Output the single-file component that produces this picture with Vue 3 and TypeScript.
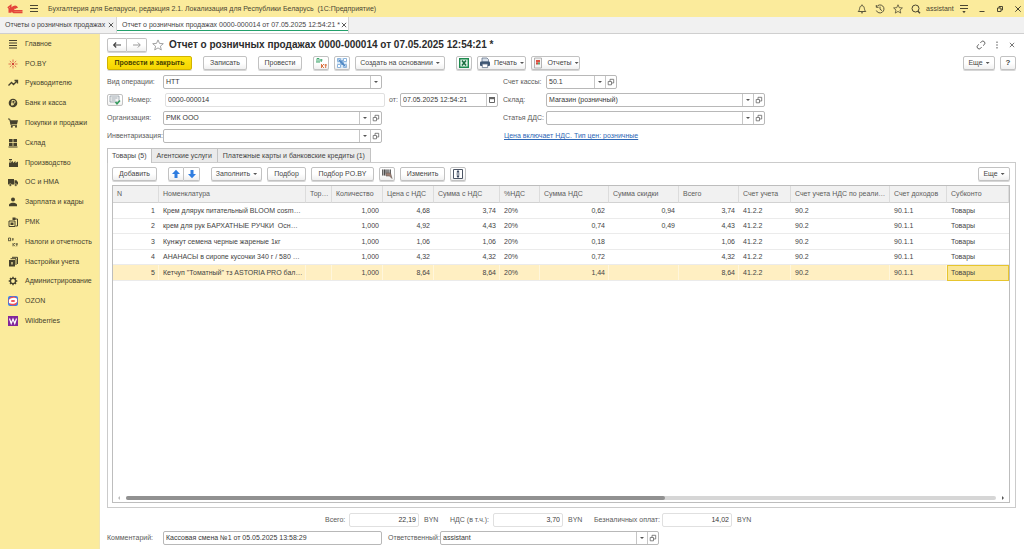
<script setup lang="ts">
import { ref } from 'vue'

interface Section { icon: string; title: string }
interface Column { title: string; width: number; num?: boolean }

const sections: Section[] = [
  { icon: 'lines', title: 'Главное' },
  { icon: 'spark', title: 'PO.BY' },
  { icon: 'trend', title: 'Руководителю' },
  { icon: 'coin', title: 'Банк и касса' },
  { icon: 'cart', title: 'Покупки и продажи' },
  { icon: 'boxes', title: 'Склад' },
  { icon: 'factory', title: 'Производство' },
  { icon: 'truck', title: 'ОС и НМА' },
  { icon: 'person', title: 'Зарплата и кадры' },
  { icon: 'register', title: 'РМК' },
  { icon: 'dtkt', title: 'Налоги и отчетность' },
  { icon: 'books', title: 'Настройки учета' },
  { icon: 'gear', title: 'Администрирование' },
  { icon: 'ozon', title: 'OZON' },
  { icon: 'wb', title: 'Wildberries' },
]

// The last column has no width of its own and takes what is left.
const columns: Column[] = [
  { title: 'N', width: 46, num: true },
  { title: 'Номенклатура', width: 147 },
  { title: 'Тор…', width: 26 },
  { title: 'Количество', width: 51, num: true },
  { title: 'Цена с НДС', width: 51, num: true },
  { title: 'Сумма с НДС', width: 66, num: true },
  { title: '%НДС', width: 40 },
  { title: 'Сумма НДС', width: 69, num: true },
  { title: 'Сумма скидки', width: 70, num: true },
  { title: 'Всего', width: 60, num: true },
  { title: 'Счет учета', width: 52 },
  { title: 'Счет учета НДС по реали…', width: 99 },
  { title: 'Счет доходов', width: 57 },
  { title: 'Субконто', width: 0 },
]

const rows: string[][] = [
  ['1', 'Крем длярук питательный BLOOM cosm…', '', '1,000', '4,68', '3,74', '20%', '0,62', '0,94', '3,74', '41.2.2', '90.2', '90.1.1', 'Товары'],
  ['2', 'крем для рук БАРХАТНЫЕ РУЧКИ\u00a0 Осн…', '', '1,000', '4,92', '4,43', '20%', '0,74', '0,49', '4,43', '41.2.2', '90.2', '90.1.1', 'Товары'],
  ['3', 'Кунжут семена черные жареные 1кг', '', '1,000', '1,06', '1,06', '20%', '0,18', '', '1,06', '41.2.2', '90.2', '90.1.1', 'Товары'],
  ['4', 'АНАНАСЫ в сиропе кусочки 340 г / 580 …', '', '1,000', '4,32', '4,32', '20%', '0,72', '', '4,32', '41.2.2', '90.2', '90.1.1', 'Товары'],
  ['5', 'Кетчуп "Томатный" тз ASTORIA PRO бал…', '', '1,000', '8,64', '8,64', '20%', '1,44', '', '8,64', '41.2.2', '90.2', '90.1.1', 'Товары'],
]

const selected = ref(4)
const operation = ref('НТТ')
</script>

<template>
  <div class="app">
    <svg class="sprite" aria-hidden="true">
      <symbol id="menu" viewBox="0 0 10 10"><path d="M1 1.5h8M1 4.5h8M1 7.5h8" stroke="currentColor" fill="none" /></symbol>
      <symbol id="bell" viewBox="0 0 10 10"><path d="M1.2 7.5h7.6C7.4 6.3 7.6 5 7.1 3.4 6.7 2.2 6 1.7 5 1.7S3.3 2.2 2.9 3.4C2.4 5 2.6 6.3 1.2 7.5zM5 .5v1.2M4 8.8h2" stroke="currentColor" stroke-width=".9" fill="none" /></symbol>
      <symbol id="history" viewBox="0 0 10 10"><path d="M1.6 2.8A4 4 0 1 1 1.3 6.500M1.300 1v2.300h2.300M5 2.600V5.200l2 1.500" stroke="currentColor" stroke-width=".9" fill="none" /></symbol>
      <symbol id="star" viewBox="0 0 12 12"><path d="M6 .9l1.500 3.500 3.800.300-2.900 2.500.900 3.700L6 8.900l-3.300 2 .900-3.700L.7 4.700l3.800-.300z" stroke="currentColor" stroke-width=".9" fill="none" /></symbol>
      <symbol id="search" viewBox="0 0 10 10"><circle cx="4.500" cy="4.500" r="3.500" stroke="currentColor" fill="none" /><path d="M6.800 7l2.200 2.200" stroke="currentColor" stroke-width="1.400" /></symbol>
      <symbol id="service" viewBox="0 0 10 10"><path d="M1 1.500h8M1 4.500h8" stroke="currentColor" /><path d="M3.300 7h3.400L5 9.200z" fill="currentColor" /></symbol>
      <symbol id="minimize" viewBox="0 0 10 10"><path d="M2.500 7.500h5" stroke="currentColor" /></symbol>
      <symbol id="restore" viewBox="0 0 10 10"><path d="M2.500 4h3.500v3.500H2.500zM4 4V2.500h3.500V6H6" stroke="currentColor" fill="none" /></symbol>
      <symbol id="close" viewBox="0 0 10 10"><path d="M2.300 2.300l5.400 5.400M7.700 2.300L2.300 7.700" stroke="currentColor" fill="none" /></symbol>
      <symbol id="link" viewBox="0 0 10 10"><path d="M4.400 2.900l1-1.200a2 2 0 0 1 2.900 2.900L7.100 5.600M5.600 7.100l-1 1.200a2 2 0 0 1-2.900-2.900l1.200-1" stroke="currentColor" stroke-width=".9" fill="none" /></symbol>
      <symbol id="dots" viewBox="0 0 10 10"><path d="M4.500 1.500h1v1.400h-1zM4.500 4.300h1v1.400h-1zM4.500 7.100h1v1.400h-1z" fill="currentColor" /></symbol>
      <symbol id="back" viewBox="0 0 10 10"><path d="M9 5H2M4.200 2.500L1.700 5l2.500 2.500" stroke="currentColor" stroke-width="1.200" fill="none" /></symbol>
      <symbol id="forward" viewBox="0 0 10 10"><path d="M1 5h7M5.800 2.500L8.300 5 5.800 7.500" stroke="currentColor" fill="none" /></symbol>
      <symbol id="open" viewBox="0 0 8 8"><path d="M1.200 3.500h3.300v3.300H1.200zM3 3.300V1.300h3.700V5H4.700" stroke="currentColor" stroke-width=".8" fill="none" /></symbol>
      <symbol id="calendar" viewBox="0 0 8 8"><path d="M1.500 1.500h5v5h-5z" stroke="currentColor" fill="none" /><path d="M1 1h6v2.200H1z" fill="currentColor" /></symbol>
      <symbol id="dtkt-color" viewBox="0 0 12 12"><path d="M2 4.500V1.500h2v3M1 5h4M5 3h2.500M6.200 2v3" stroke="#3fa66c" fill="none" /><path d="M6.500 7v4M9 7L7 9 9 11M9.500 8H12M10.700 7v4" stroke="#dc7543" fill="none" /></symbol>
      <symbol id="structure" viewBox="0 0 12 12"><path d="M1 1h10v10H1z" fill="#d8e8f7" /><path d="M1.500 1.500h3v3h-3zM7.500 1.500h3v3h-3zM7.500 7.500h3v3h-3zM1.500 7.500h3v3h-3z" stroke="#8db5dd" fill="#fff" /><path d="M2.500 2.500l7 7M4 6h4M6 3v5" stroke="#4c86c4" stroke-width="1.200" /></symbol>
      <symbol id="excel" viewBox="0 0 12 12"><path d="M1.700 1.700h8.600v8.600H1.700z" fill="#e4f3e9" stroke="#1f8b50" stroke-width="1.400" /><path d="M4 3.500l4 5M8 3.500l-4 5" stroke="#176e3e" stroke-width="1.500" /></symbol>
      <symbol id="printer" viewBox="0 0 12 12"><path d="M3 1h5l1.500 1.500V5H3z" fill="#d7dfe9" stroke="#65758b" stroke-width=".8" /><rect x="1" y="4.500" width="10" height="4.500" rx="1" fill="#3e5673" /><path d="M3.300 7h5.400v3.600H3.300z" fill="#fff" stroke="#65758b" stroke-width=".8" /></symbol>
      <symbol id="report" viewBox="0 0 12 12"><path d="M2.500 1h7v10h-7z" fill="#f4f4f4" stroke="#a2a2a2" stroke-width=".8" /><path d="M4 3h4v2.500H4z" fill="#dd5242" /><path d="M4 5.500h2v2H4z" fill="#d04d40" /><path d="M6 5.500h2v2H6z" fill="#58a577" /></symbol>
      <symbol id="journal" viewBox="0 0 12 12"><path d="M1 2h9v6H1z" fill="#f5f5f5" stroke="#8e9aa3" stroke-width=".8" /><path d="M2.500 4h6M2.500 6h4" stroke="#8e9aa3" stroke-width=".8" /><path d="M6.500 8l1.500 1.800L11 6.500" stroke="#349b5c" stroke-width="1.500" fill="none" /></symbol>
      <symbol id="up" viewBox="0 0 10 10"><path d="M5 .8l4 4.200H6.500v4h-3V5H1z" fill="#2f7de0" /></symbol>
      <symbol id="down" viewBox="0 0 10 10"><path d="M5 9.200L1 5h2.500V1h3v4H9z" fill="#2f7de0" /></symbol>
      <symbol id="scanner" viewBox="0 0 12 12"><path d="M1 1.500h9v6H1z" fill="#c5c5c5" /><path d="M1.700 1.500v6M3.500 1.500v6M5 1.500v4M7 1.500v4M9.300 1.500v6" stroke="#4c4c4c" /><path d="M5 5h4.500L11 10.500 8.500 8H5z" fill="#a08074" stroke="#665c58" stroke-width=".6" /></symbol>
      <symbol id="fit" viewBox="0 0 12 12"><path d="M1.500 1.500h9v9h-9z" stroke="#4d5665" fill="#fff" /><path d="M6 2.500v2.500M6 7v2.500M4.500 6h3" stroke="#35425a" fill="none" /><path d="M4.300 4.300L6 2.300l1.700 2zM4.300 7.700L6 9.700l1.700-2z" fill="#35425a" /></symbol>

      <symbol id="lines" viewBox="0 0 12 12"><path d="M2 2.500h8M2 5h8M2 7.500h8M2 10h8" stroke="currentColor" stroke-width="1.200" /></symbol>
      <symbol id="spark" viewBox="0 0 12 12"><path d="M6 1.500v2.500M6 8v2.500M1.500 6H4M8 6h2.500M2.800 3l1.700 1.500M9.200 3L7.500 4.500M2.800 9l1.700-1.500M9.200 9L7.500 7.500" stroke="#db6446" stroke-width=".9" /><circle cx="6" cy="6" r="1.200" fill="#cf3e35" /></symbol>
      <symbol id="trend" viewBox="0 0 12 12"><path d="M1.500 8.500l3-3 2 2L10 4M7.500 3.500h3v3" stroke="currentColor" stroke-width="1.300" fill="none" /></symbol>
      <symbol id="coin" viewBox="0 0 12 12"><circle cx="6" cy="6" r="4.300" fill="currentColor" /><path d="M5 8.800V3.500h1.700a1.300 1.300 0 0 1 0 2.800H4M4 7.600h3" stroke="#fbeb9c" stroke-width=".9" fill="none" /></symbol>
      <symbol id="cart" viewBox="0 0 12 12"><path d="M2.800 3.300H11L10 7.300H3.800z" fill="currentColor" /><path d="M1 2h1.700l1.500 6.300H10" stroke="currentColor" fill="none" /><circle cx="4.800" cy="9.800" r="1" fill="currentColor" /><circle cx="9" cy="9.800" r="1" fill="currentColor" /></symbol>
      <symbol id="boxes" viewBox="0 0 12 12"><path d="M2 2h3.600v3.200H2zM6.400 2H10v3.200H6.400zM2 6h3.600v3H2zM6.400 6H10v3H6.400zM1.500 9.400h9v1.100h-9z" fill="currentColor" /></symbol>
      <symbol id="factory" viewBox="0 0 12 12"><path d="M2 10V5.500h2L6 4v2l2.500-2v2L11 4.500V10z" fill="currentColor" /><path d="M2 2.500h3M2.500 4h2" stroke="currentColor" /></symbol>
      <symbol id="truck" viewBox="0 0 12 12"><path d="M1 3h6v5.500H1zM7.500 4.300h2L11 6.300v2.200H7.500z" fill="currentColor" /><circle cx="3.300" cy="9" r="1.300" fill="currentColor" stroke="#fbeb9c" stroke-width=".5" /><circle cx="8.800" cy="9" r="1.300" fill="currentColor" stroke="#fbeb9c" stroke-width=".5" /></symbol>
      <symbol id="person" viewBox="0 0 12 12"><circle cx="6" cy="3.600" r="2" fill="currentColor" /><path d="M2 10.200V8.700c0-1.200 2-1.700 3-2h2c1 .300 3 .800 3 2v1.500z" fill="currentColor" /></symbol>
      <symbol id="register" viewBox="0 0 12 12"><path d="M2 5h6v5.500H2zM6 3h4.500v7H8.500" stroke="currentColor" fill="none" /><path d="M3.500 6.500h3v2.500h-3zM5.500 1.500h3V4h-3z" fill="currentColor" /></symbol>
      <symbol id="dtkt" viewBox="0 0 12 12"><path d="M1.500 4.500V2h2v2.500M1 4.700h3.200M4.800 3h2M5.800 2.300v2.500M6 7v3.300M8 7L6.500 8.600 8 10.300M8.500 8H11M9.800 7.300v3" stroke="currentColor" stroke-width=".8" fill="none" /></symbol>
      <symbol id="books" viewBox="0 0 12 12"><path d="M2 4h6v6.500H2z" fill="currentColor" /><path d="M3.500 2.700H9V9M5 1.300h5.500V8" stroke="currentColor" fill="none" /><path d="M4 6h2v2.500H4z" fill="#b9ad78" /></symbol>
      <symbol id="gear" viewBox="0 0 12 12"><circle cx="6" cy="6" r="2.600" stroke="currentColor" stroke-width="1.400" fill="none" /><path d="M6 1.700v1.500M6 8.800v1.500M1.700 6h1.500M8.800 6h1.500M3 3l1 1M8 8l1 1M9 3L8 4M4 8L3 9" stroke="currentColor" stroke-width="1.400" /></symbol>
      <symbol id="ozon" viewBox="0 0 12 12"><rect x="1" y="1" width="10" height="10" rx="2" fill="#337ff0" /><circle cx="6" cy="6" r="4.600" fill="#ee4f55" /><path d="M2 4.800C3.500 2.800 8 2 10 3.800v2.600c-.600 1.800-5 3.300-8 1.600z" fill="#fff" /><ellipse cx="6" cy="6" rx="2.200" ry="1" fill="#ee4f55" /></symbol>
      <symbol id="wb" viewBox="0 0 12 12"><path d="M1 1h10v10H1z" fill="#82269b" /><path d="M2.500 3.500l1.700 5L6 4l1.800 4.500 1.700-5" stroke="#fff" stroke-width="1.200" fill="none" /></symbol>
    </svg>

    <header class="titlebar">
      <svg class="logo" viewBox="0 0 16 10" role="img" aria-label="1С"><path d="M.800 3.900L3.700 1.700V8.700M2.300 4v4.700M10.400 3.900A3 3 0 1 0 8.200 8.500h7.300M8.900 4.500A1.400 1.400 0 1 0 8.200 6.700h7.300" stroke="#e4463a" stroke-width="1.600" fill="none" /></svg>
      <button class="plain" aria-label="Меню"><svg class="i10"><use href="#menu" /></svg></button>
      <span class="app-title">Бухгалтерия для Беларуси, редакция 2.1. Локализация для Республики Беларусь&nbsp; (1С:Предприятие)</span>
      <div class="title-tools">
        <button class="plain" aria-label="Оповещения"><svg class="i10"><use href="#bell" /></svg></button>
        <button class="plain" aria-label="История"><svg class="i10"><use href="#history" /></svg></button>
        <button class="plain" aria-label="Избранное"><svg class="i10"><use href="#star" /></svg></button>
        <button class="plain" aria-label="Поиск"><svg class="i10"><use href="#search" /></svg></button>
        <span class="user">assistant</span>
        <button class="plain" aria-label="Сервис"><svg class="i10"><use href="#service" /></svg></button>
        <button class="plain" aria-label="Свернуть"><svg class="i10"><use href="#minimize" /></svg></button>
        <button class="plain" aria-label="Развернуть"><svg class="i10"><use href="#restore" /></svg></button>
        <button class="plain" aria-label="Закрыть"><svg class="i10"><use href="#close" /></svg></button>
      </div>
    </header>

    <nav class="window-tabs">
      <div class="window-tab first"><a href="#list">Отчеты о розничных продажах</a><button class="plain x" aria-label="Закрыть вкладку"><svg class="i8"><use href="#close" /></svg></button></div>
      <div class="window-tab current"><a href="#doc">Отчет о розничных продажах 0000-000014 от 07.05.2025 12:54:21 *</a><button class="plain x" aria-label="Закрыть вкладку"><svg class="i8"><use href="#close" /></svg></button></div>
    </nav>

    <div class="body">
      <nav class="sidebar">
        <a v-for="s in sections" :key="s.title" href="#section" class="section">
          <svg class="i12"><use :href="'#' + s.icon" /></svg>{{ s.title }}
        </a>
      </nav>

      <main class="document">
        <div class="heading">
          <div class="group">
            <button class="btn" aria-label="Назад"><svg class="i10"><use href="#back" /></svg></button>
            <button class="btn dim" aria-label="Вперед"><svg class="i10"><use href="#forward" /></svg></button>
          </div>
          <button class="plain favorite" aria-label="В избранное"><svg class="i12"><use href="#star" /></svg></button>
          <h1>Отчет о розничных продажах 0000-000014 от 07.05.2025 12:54:21 *</h1>
          <div class="heading-tools">
            <button class="plain" aria-label="Ссылка"><svg class="i10"><use href="#link" /></svg></button>
            <button class="plain" aria-label="Ещё действия"><svg class="i10"><use href="#dots" /></svg></button>
            <button class="plain" aria-label="Закрыть"><svg class="i8"><use href="#close" /></svg></button>
          </div>
        </div>

        <div class="toolbar commands">
          <button class="btn primary">Провести и закрыть</button>
          <button class="btn w44 gap">Записать</button>
          <button class="btn w44 gap">Провести</button>
          <button class="btn icon gap" aria-label="Проводки"><svg class="i12"><use href="#dtkt-color" /></svg></button>
          <button class="btn icon" aria-label="Структура подчиненности"><svg class="i12"><use href="#structure" /></svg></button>
          <button class="btn w90">Создать на основании<i class="caret" /></button>
          <button class="btn icon gap" aria-label="Excel"><svg class="i12"><use href="#excel" /></svg></button>
          <button class="btn w49"><svg class="i12"><use href="#printer" /></svg>Печать<i class="caret" /></button>
          <button class="btn w49"><svg class="i12"><use href="#report" /></svg>Отчеты<i class="caret" /></button>
          <button class="btn w32 right">Еще<i class="caret" /></button>
          <button class="btn icon help">?</button>
        </div>

        <div class="form">
          <div class="line">
            <label class="lbl" for="operation">Вид операции:</label>
            <div class="field w219">
              <select id="operation" v-model="operation"><option>НТТ</option></select>
              <span class="drop"><i class="caret" /></span>
            </div>
          </div>
          <div class="line">
            <label class="lbl2" for="cash">Счет кассы:</label>
            <div class="field w71">
              <input id="cash" value="50.1" />
              <button class="drop" aria-label="Выбрать"><i class="caret" /></button>
              <button class="drop" aria-label="Открыть"><svg class="i8"><use href="#open" /></svg></button>
            </div>
          </div>

          <div class="line">
            <button class="btn journal" aria-label="Журнал"><svg class="i12"><use href="#journal" /></svg></button>
            <label class="number-label" for="number">Номер:</label>
            <div class="field soft w220"><input id="number" value="0000-000014" /></div>
            <label class="from" for="date">от:</label>
            <div class="field w98">
              <input id="date" value="07.05.2025 12:54:21" />
              <button class="drop" aria-label="Календарь"><svg class="i8"><use href="#calendar" /></svg></button>
            </div>
          </div>
          <div class="line">
            <label class="lbl2" for="store">Склад:</label>
            <div class="field w219">
              <input id="store" value="Магазин (розничный)" />
              <button class="drop" aria-label="Выбрать"><i class="caret" /></button>
              <button class="drop" aria-label="Открыть"><svg class="i8"><use href="#open" /></svg></button>
            </div>
          </div>

          <div class="line">
            <label class="lbl" for="org">Организация:</label>
            <div class="field w219">
              <input id="org" value="РМК ООО" />
              <button class="drop" aria-label="Выбрать"><i class="caret" /></button>
              <button class="drop" aria-label="Открыть"><svg class="i8"><use href="#open" /></svg></button>
            </div>
          </div>
          <div class="line">
            <label class="lbl2" for="dds">Статья ДДС:</label>
            <div class="field w219">
              <input id="dds" />
              <button class="drop" aria-label="Выбрать"><i class="caret" /></button>
              <button class="drop" aria-label="Открыть"><svg class="i8"><use href="#open" /></svg></button>
            </div>
          </div>

          <div class="line">
            <label class="lbl" for="inv">Инвентаризация:</label>
            <div class="field w219">
              <input id="inv" />
              <button class="drop" aria-label="Выбрать"><i class="caret" /></button>
              <button class="drop" aria-label="Открыть"><svg class="i8"><use href="#open" /></svg></button>
            </div>
          </div>
          <div class="line"><a class="price-link" href="#prices">Цена включает НДС. Тип цен: розничные</a></div>
        </div>

        <div class="tabs" role="tablist">
          <button class="tab active" role="tab" aria-selected="true">Товары (5)</button>
          <button class="tab" role="tab">Агентские услуги</button>
          <button class="tab" role="tab">Платежные карты и банковские кредиты (1)</button>
        </div>

        <section class="panel">
          <div class="toolbar">
            <button class="btn w45">Добавить</button>
            <div class="group gap">
              <button class="btn" aria-label="Вверх"><svg class="i10"><use href="#up" /></svg></button>
              <button class="btn" aria-label="Вниз"><svg class="i10"><use href="#down" /></svg></button>
            </div>
            <button class="btn w51 gap">Заполнить<i class="caret" /></button>
            <button class="btn w39">Подбор</button>
            <button class="btn w63">Подбор PO.BY</button>
            <button class="btn icon" aria-label="Сканер"><svg class="i12"><use href="#scanner" /></svg></button>
            <button class="btn w45">Изменить</button>
            <button class="btn icon" aria-label="Высота строк"><svg class="i12"><use href="#fit" /></svg></button>
            <button class="btn w32 right">Еще<i class="caret" /></button>
          </div>

          <div class="grid">
            <table>
              <colgroup>
                <col v-for="c in columns" :key="c.title" :style="c.width ? { width: c.width + 'px' } : {}" />
              </colgroup>
              <thead>
                <tr><th v-for="c in columns" :key="c.title">{{ c.title }}</th></tr>
              </thead>
              <tbody>
                <tr v-for="(r, i) in rows" :key="i" :class="{ selected: i === selected }" @click="selected = i">
                  <td v-for="(cell, j) in r" :key="j" :class="{ num: columns[j].num }">{{ cell }}</td>
                </tr>
              </tbody>
            </table>
            <div class="scrollbar"><i class="arrow left" /><div class="track"><div class="thumb" /></div><i class="arrow" /></div>
          </div>
        </section>

        <div class="totals">
          <label for="total">Всего:</label>
          <div class="field soft w70"><input id="total" class="num" value="22,19" readonly /></div>
          <span class="unit">BYN</span>
          <label class="vat" for="vat">НДС (в т.ч.):</label>
          <div class="field soft w70"><input id="vat" class="num" value="3,70" readonly /></div>
          <span class="unit">BYN</span>
          <label class="cashless" for="cashless">Безналичных оплат:</label>
          <div class="field soft w70"><input id="cashless" class="num" value="14,02" readonly /></div>
          <span class="unit">BYN</span>
        </div>

        <div class="line footer">
          <label class="lbl" for="comment">Комментарий:</label>
          <div class="field w219"><input id="comment" value="Кассовая смена №1 от 05.05.2025 13:58:29" /></div>
          <label class="resp" for="resp">Ответственный:</label>
          <div class="field w219">
            <input id="resp" value="assistant" />
            <button class="drop" aria-label="Выбрать"><i class="caret" /></button>
            <button class="drop" aria-label="Открыть"><svg class="i8"><use href="#open" /></svg></button>
          </div>
        </div>
      </main>
    </div>
  </div>
</template>

<style>
body {
  margin: 0;
}
</style>

<style scoped>
* {
  box-sizing: border-box;
}
.app {
  display: flex;
  flex-direction: column;
  min-height: 100vh;
  background: #fff;
  color: #444;
  font: 7px/10px "Liberation Sans", Arial, sans-serif;
  white-space: nowrap;
}
.sprite {
  position: absolute;
  width: 0;
  height: 0;
}
button,
input,
select {
  margin: 0;
  padding: 0;
  border: 0;
  background: none;
  color: inherit;
  font: inherit;
  outline: none;
}
a {
  color: inherit;
  text-decoration: none;
}
svg {
  display: block;
  flex: none;
}
.i8 {
  width: 8px;
  height: 8px;
}
.i10 {
  width: 10px;
  height: 10px;
}
.i12 {
  width: 12px;
  height: 12px;
}
.plain {
  display: flex;
  align-items: center;
  justify-content: center;
}

.titlebar {
  display: flex;
  align-items: center;
  height: 17px;
  padding-left: 7px;
  background: #fbeb9c;
  color: #4a4632;
}
.logo {
  width: 16px;
  height: 10px;
  margin-right: 6px;
}
.app-title {
  margin-left: 9px;
}
.title-tools {
  display: flex;
  align-items: center;
  gap: 8px;
  margin-left: auto;
  padding-right: 1px;
}
.user {
  width: 27px;
  margin-left: -3px;
  margin-right: -2px;
}

.window-tabs {
  display: flex;
  height: 17px;
  background: #f1f1f1;
  border-bottom: 1px solid #cfcfcf;
}
.window-tab {
  display: flex;
  align-items: center;
  justify-content: space-between;
  padding: 0 1px 0 5px;
  border-right: 1px solid #d4d4d4;
}
.window-tab.first {
  width: 117px;
}
.window-tab.current {
  width: 232px;
  background: #fff;
  box-shadow: inset 0 -2px #fff, inset 0 -3px #23a06b;
}
.x {
  color: #333;
}

.body {
  display: flex;
  flex: 1;
  background: linear-gradient(to right, #fbeb9c 99px, #f1e6b4 99px, #f1e6b4 100px, #fff 100px);
}
.sidebar {
  display: grid;
  grid-template-rows: repeat(15, 1fr);
  width: 100px;
  height: 297px;
  flex: none;
  color: #45412d;
}
.section {
  display: flex;
  align-items: center;
  gap: 6px;
  padding-left: 7px;
}

.document {
  display: flex;
  flex-direction: column;
  flex: 1;
  min-width: 0;
  padding: 4px 8px 4px 7px;
}
.heading {
  display: flex;
  align-items: center;
  height: 14px;
}
.heading h1 {
  margin: 0;
  color: #2c2c2c;
  font-size: 10px;
  line-height: 14px;
}
.favorite {
  margin: 0 5px;
  color: #999;
}
.heading-tools {
  display: flex;
  align-items: center;
  gap: 6px;
  margin-left: auto;
  color: #555;
}

.btn {
  display: flex;
  align-items: center;
  justify-content: center;
  gap: 3px;
  height: 14px;
  border: 1px solid #c2c2c2;
  border-radius: 2px;
  background: linear-gradient(#fff 50%, #f0f0f0);
  box-shadow: 0 1px #d6d6d6;
}
.group {
  display: flex;
}
.group .btn {
  width: 20px;
}
.toolbar .group .btn {
  width: 16px;
}
.group .btn:first-child {
  border-radius: 2px 0 0 2px;
}
.group .btn:last-child {
  border-left: 0;
  border-radius: 0 2px 2px 0;
}
.group .dim {
  color: #999;
}
.toolbar {
  display: flex;
  gap: 5px;
}
.toolbar .gap {
  margin-left: 6px;
}
.commands {
  margin-top: 4px;
}
.primary {
  width: 85px;
  border-color: #d1b300;
  background: linear-gradient(#ffe713, #f5d500);
  color: #4a4200;
  font-weight: bold;
}
.icon {
  width: 16px;
}
.help {
  font-size: 8px;
  font-weight: bold;
}
.right {
  margin-left: auto;
}
.w32 { width: 32px; }
.w39 { width: 39px; }
.w44 { width: 44px; }
.w45 { width: 45px; }
.w49 { width: 49px; }
.w51 { width: 51px; }
.w63 { width: 63px; }
.w70 { width: 70px; }
.w71 { width: 71px; }
.w90 { width: 90px; }
.w98 { width: 98px; }
.w219 { width: 219px; }
.w220 { width: 220px; }
.caret {
  width: 4px;
  height: 2px;
  flex: none;
  background: #555;
  clip-path: polygon(0 0, 100% 0, 50% 100%);
}

.form {
  display: grid;
  grid-template-columns: 396px 1fr;
  row-gap: 4px;
  margin-top: 5px;
  color: #5a5a5a;
}
.line {
  display: flex;
  align-items: center;
  height: 14px;
}
.lbl {
  width: 56px;
}
.lbl2 {
  width: 43px;
}
.journal {
  width: 16px;
  height: 12px;
  box-shadow: none;
}
.number-label {
  width: 37px;
  margin-left: 5px;
}
.from {
  width: 11px;
  margin-left: 4px;
}
.field {
  display: flex;
  height: 14px;
  border: 1px solid #b8b8b8;
  border-radius: 2px;
  background: #fff;
  color: #383838;
}
.field.soft {
  border-color: #e0e0e0;
}
.field input,
.field select {
  flex: 1;
  min-width: 0;
  padding-left: 2px;
  appearance: none;
}
.field .num {
  padding-right: 2px;
  text-align: right;
}
.drop {
  display: flex;
  align-items: center;
  justify-content: center;
  width: 11px;
  border-left: 1px solid #c6c6c6;
  color: #666;
}
.price-link {
  padding-left: 1px;
  color: #2d67b5;
  text-decoration: underline;
}

.tabs {
  display: flex;
  height: 14px;
  margin-top: 5px;
}
.tab {
  padding: 0 5px;
  border: 1px solid #c3c3c3;
  border-left: 0;
  border-bottom: 0;
  background: #ebebeb;
}
.tab.active {
  z-index: 1;
  margin-bottom: -1px;
  padding: 0 4px;
  border-left: 1px solid #c3c3c3;
  background: #fff;
}
.panel {
  display: flex;
  flex-direction: column;
  flex: 1;
  padding: 4px 5px 4px 4px;
  border: 1px solid #cbcbcb;
}
.grid {
  display: flex;
  flex-direction: column;
  flex: 1;
  margin-top: 4px;
  border: 1px solid #bdbdbd;
}
table {
  width: 100%;
  border-collapse: separate;
  border-spacing: 0;
  table-layout: fixed;
}
th,
td {
  padding: 0 1px 0 4px;
  text-align: left;
}
th {
  height: 17px;
  border-right: 1px solid #dcdcdc;
  border-bottom: 1px solid #d2d2d2;
  background: #f1f1f1;
  color: #5c5c5c;
  font-weight: normal;
}
td {
  height: 15px;
  border-bottom: 1px solid #ebebeb;
}
tbody tr:nth-child(odd) td {
  height: 16px;
}
td.num {
  padding-right: 4px;
  text-align: right;
}
.selected td {
  background: #ffefc2;
  box-shadow: inset -1px 0 #fff6dc;
}
.selected td:last-child {
  border-bottom-color: #e7c52e;
  background: #fae696;
  box-shadow: inset 1px 1px #e7c52e, inset -1px 0 #e7c52e;
}
.scrollbar {
  display: flex;
  align-items: center;
  gap: 6px;
  height: 8px;
  margin-top: auto;
  padding: 0 5px;
}
.track {
  flex: 1;
  height: 4px;
  border-radius: 2px;
  background: #d6d6d6;
}
.thumb {
  width: 62%;
  height: 4px;
  border-radius: 2px;
  background: #919191;
}
.arrow {
  width: 2px;
  height: 4px;
  background: #555;
  clip-path: polygon(0 0, 100% 50%, 0 100%);
}
.arrow.left {
  background: #bbb;
  clip-path: polygon(100% 0, 0 50%, 100% 100%);
}

.totals {
  display: flex;
  align-items: center;
  margin-top: 5px;
  padding-left: 218px;
  color: #5a5a5a;
}
.totals > label {
  width: 24px;
}
.totals > .vat {
  width: 43px;
}
.totals > .cashless {
  width: 68px;
}
.unit {
  width: 31px;
  padding-left: 5px;
}
.footer {
  margin-top: 4px;
  color: #5a5a5a;
}
.resp {
  width: 58px;
  padding-left: 6px;
}
</style>
